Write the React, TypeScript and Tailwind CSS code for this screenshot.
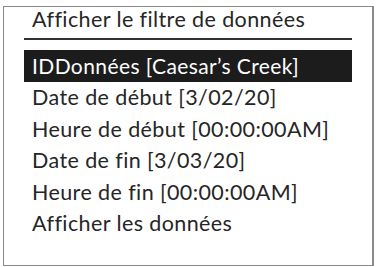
import React from "react";

const rows = [
  "Date de début [3/02/20]",
  "Heure de début [00:00:00AM]",
  "Date de fin [3/03/20]",
  "Heure de fin [00:00:00AM]",
  "Afficher les données",
];

export default function App() {
  return (
    <div
      className="w-[376px] h-[267px] bg-white pt-[6px] pl-[3px] pr-[2px] pb-[1px]"
      style={{ fontFamily: "Lato, 'Noto Sans', sans-serif" }}
    >
      <div className="h-full border-l border-t border-b border-r-2 border-[#8a8a8a] text-[#262626] tracking-[0.4px]">
        <div className="pl-[28px] h-[31px] text-[21.5px] leading-[24px]">
          Afficher le filtre de données
        </div>
        <div className="mx-[20px] h-[2px] bg-[#333]" />
        <div className="mx-[20px] mt-[10px] h-[32px] bg-[#1c1c1c] text-white pl-[8px] text-[21px] leading-[32px]">
          IDDonnées [Caesar’s Creek]
        </div>
        {rows.map((r) => (
          <div key={r} className="pl-[28px] h-[31.5px] text-[21.5px] leading-[31.5px]">
            {r}
          </div>
        ))}
      </div>
    </div>
  );
}
